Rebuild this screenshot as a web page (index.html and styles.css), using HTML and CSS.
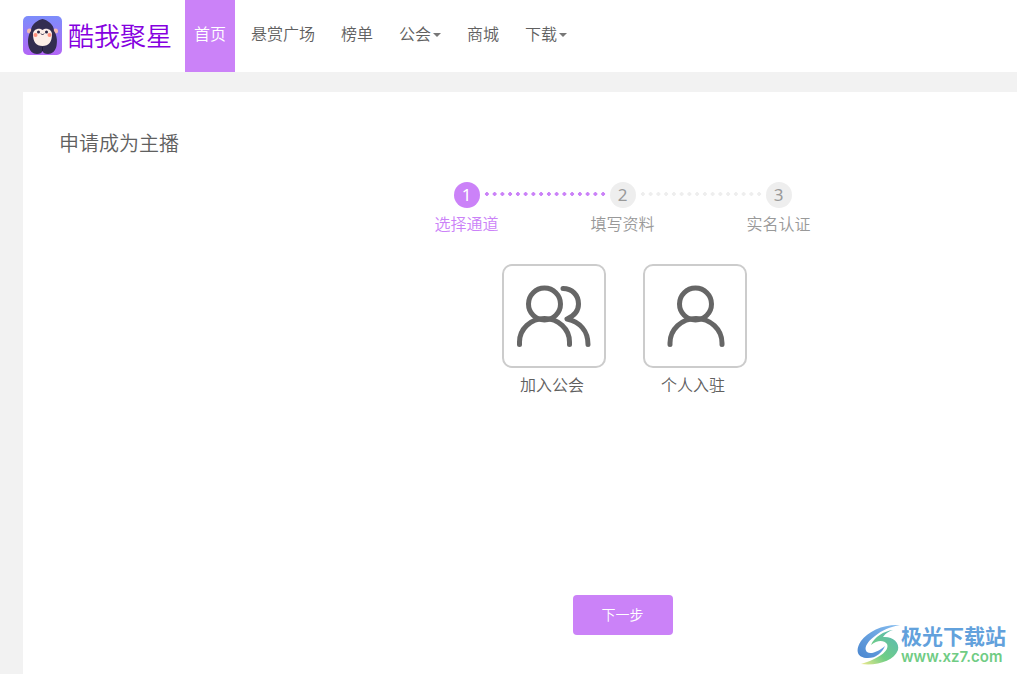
FILE: index.html
```html
<!DOCTYPE html>
<html lang="zh-CN">
<head>
<meta charset="utf-8">
<title>申请成为主播 - 酷我聚星</title>
<link rel="stylesheet" href="styles.css">
</head>
<body>
<header class="header">
  <a class="brand" href="#">
    <svg class="brand-icon" viewBox="0 0 39 39" aria-hidden="true">
      <defs>
        <linearGradient id="tile" x1="0" y1="0" x2="0" y2="1"><stop offset="0" stop-color="#7c8dfb"/><stop offset="1" stop-color="#b366f6"/></linearGradient>
      </defs>
      <rect width="39" height="39" rx="5" fill="url(#tile)"/>
      <circle cx="6.500" cy="15" r="2.500" fill="#f3b9b0"/><circle cx="32.500" cy="15" r="2.500" fill="#f3b9b0"/>
      <path d="M19.500 3C15 4 8 8 8 15C5 19 4.500 25 5.500 30C6.500 35 10 38 14 38C17 38 19 37 19.500 35C20 37 22 38 25 38C29 38 32.500 35 33.500 30C34.500 25 34 19 31 15C31 8 24 4 19.500 3Z" fill="#332d50"/>
      <path d="M19.500 14C16 11 10 13.500 10 18C10 26 13 30 19.500 30C26 30 29 26 29 18C29 13.500 23 11 19.500 14Z" fill="#fdeee8"/>
      <circle cx="12.500" cy="19" r="2" fill="#ff8f7c"/><circle cx="26.500" cy="19" r="2" fill="#ff8f7c"/>
      <circle cx="15.500" cy="16" r="1.500" fill="#292340"/><circle cx="23.500" cy="16" r="1.500" fill="#292340"/>
      <path d="M18 17.500L19.500 19L21 17.500" fill="none" stroke="#292340"/>
      <path d="M19.500 31V35" stroke="#1e1938"/>
    </svg>
    <span class="brand-name">酷我聚星</span>
  </a>
  <nav class="nav">
    <a class="nav-link active" href="#">首页</a>
    <a class="nav-link" href="#">悬赏广场</a>
    <a class="nav-link" href="#">榜单</a>
    <a class="nav-link has-menu" href="#">公会</a>
    <a class="nav-link" href="#">商城</a>
    <a class="nav-link has-menu" href="#">下载</a>
  </nav>
</header>
<main class="page">
  <section class="panel">
    <h1 class="title">申请成为主播</h1>
    <div class="wizard">
      <ol class="steps">
        <li class="step current"><span class="step-number">1</span><span class="step-name">选择通道</span><span class="step-line"></span></li>
        <li class="step"><span class="step-number">2</span><span class="step-name">填写资料</span><span class="step-line"></span></li>
        <li class="step"><span class="step-number">3</span><span class="step-name">实名认证</span></li>
      </ol>
      <div class="channels">
        <button class="channel" type="button">
          <span class="channel-box">
            <svg viewBox="0 0 100 100" aria-hidden="true"><circle cx="40.500" cy="38" r="16"/><path d="M15.500 78.500V76a25 23.500 0 0 1 50 0V78.500"/><path d="M59 22.500C68 22.500 74.500 29 74.500 38C74.500 46 70 50 63 53C76 56 84 65 84 78.500"/></svg>
          </span>
          <span>加入公会</span>
        </button>
        <button class="channel" type="button">
          <span class="channel-box">
            <svg viewBox="0 0 100 100" aria-hidden="true"><circle cx="50.500" cy="38" r="16"/><path d="M25 78.500V77a26 24.500 0 0 1 52 0V78.500"/></svg>
          </span>
          <span>个人入驻</span>
        </button>
      </div>
      <button class="next" type="button">下一步</button>
    </div>
  </section>
</main>
<aside class="watermark">
  <svg class="watermark-icon" viewBox="0 0 44 42" aria-hidden="true">
    <defs>
      <linearGradient id="blue" x1="0" y1="1" x2="1" y2="0"><stop offset="0" stop-color="#4a86cf"/><stop offset="1" stop-color="#86bdf0"/></linearGradient>
      <linearGradient id="green" x1="1" y1="0" x2="0" y2="1"><stop offset="0" stop-color="#58b7b8"/><stop offset=".6" stop-color="#70ce85"/><stop offset="1" stop-color="#efe98c"/></linearGradient>
    </defs>
    <path d="M43 1C27 0 11 7 4 17C-2 26 0 33 9 34C18 35 25 29 28 22C22 27 14 31 10 28C6 24 11 17 18 12C25 6 33 3 43 1Z" fill="url(#blue)"/>
    <path d="M36 6C27 7 17 13 14 21C20 16 27 16 30 20C33 27 21 35 4 40C20 42 37 37 41 26C43 18 35 12 26 13C29 9 32 7 36 6Z" fill="url(#green)"/>
  </svg>
  <span class="watermark-text"><span class="watermark-name">极光下载站</span><span class="watermark-url">www.xz7.com</span></span>
</aside>
</body>
</html>
```

FILE: styles.css
```css
* {
  box-sizing: border-box;
}

body {
  margin: 0;
  min-height: 100vh;
  display: flex;
  flex-direction: column;
  position: relative;
  background: #f2f2f2;
  color: #606060;
  font: 16px/24px "Noto Sans CJK SC", sans-serif;
  font-weight: 350;
}

button {
  border: 0;
  padding: 0;
  background: none;
  color: inherit;
  font: inherit;
  cursor: pointer;
}

a {
  color: inherit;
  text-decoration: none;
}

.header {
  display: flex;
  height: 72px;
  padding-left: 23px;
  background: #fff;
}

.brand {
  display: flex;
  align-items: center;
  gap: 6px;
  width: 162px;
  padding-bottom: 2px;
  color: #8500e0;
}

.brand-icon {
  width: 39px;
  height: 39px;
}

.brand-name {
  font-size: 26px;
  line-height: 38px;
  white-space: nowrap;
}

.nav {
  display: flex;
}

.nav-link {
  display: flex;
  align-items: center;
  padding: 0 13px 6px;
  white-space: nowrap;
}

.nav-link.active {
  margin-right: 3px;
  padding: 0 9px 6px;
  background: #cb82f8;
  color: #fff;
}

.has-menu::after {
  content: "";
  margin: 4px 0 0 2px;
  border: 4px solid transparent;
  border-top-color: #777;
  border-bottom: 0;
}

.page {
  flex: 1;
  display: flex;
  padding: 20px 0 0 23px;
}

.panel {
  flex: 1;
  display: flex;
  flex-direction: column;
  padding: 36px 0 39px 36px;
  background: #fff;
}

.title {
  margin: 0 0 24px;
  font-size: 20px;
  line-height: 30px;
  font-weight: 350;
}

.wizard {
  flex: 1;
  display: flex;
  flex-direction: column;
  align-items: center;
  padding-left: 169px;
}

.steps {
  display: grid;
  grid-template-columns: 64px 92px 64px 92px 64px;
  grid-template-rows: 26px 24px;
  row-gap: 3px;
  margin: 0 0 29px;
  padding: 0;
  list-style: none;
  color: #999;
}

.step {
  display: contents;
}

.step.current {
  color: #cb82f8;
}

.step-number {
  grid-row: 1;
  justify-self: center;
  width: 26px;
  height: 26px;
  border-radius: 50%;
  background: #eee;
  font: 17px/26px "Noto Sans", sans-serif;
  text-align: center;
}

.current .step-number {
  background: #cb82f8;
  color: #fff;
}

.step-name {
  grid-row: 2;
  white-space: nowrap;
}

.step:nth-child(1) > .step-number,
.step:nth-child(1) > .step-name {
  grid-column: 1;
}

.step:nth-child(2) > .step-number,
.step:nth-child(2) > .step-name {
  grid-column: 3;
}

.step:nth-child(3) > .step-number,
.step:nth-child(3) > .step-name {
  grid-column: 5;
}

.step-line {
  grid-row: 1;
  grid-column: 1 / 4;
  height: 8px;
  margin: 8px 48px;
  background: radial-gradient(circle, #eee 2px, transparent 2px) 0 0 / 8px 8px round;
}

.step:nth-child(2) > .step-line {
  grid-column: 3 / 6;
}

.current .step-line {
  background-image: radial-gradient(circle, #cb82f8 2px, transparent 2px);
}

.channels {
  display: flex;
  gap: 41px;
  margin-bottom: auto;
}

.channel {
  display: flex;
  flex-direction: column;
  align-items: center;
  gap: 4px;
  width: 100px;
}

.channel-box {
  align-self: flex-start;
  width: 104px;
  height: 104px;
  border: 2px solid #ccc;
  border-radius: 10px;
}

.channel-box svg {
  display: block;
  fill: none;
  stroke: #666;
  stroke-width: 5;
  stroke-linecap: round;
  stroke-linejoin: round;
}

.next {
  width: 100px;
  height: 40px;
  padding-bottom: 2px;
  border-radius: 4px;
  background: #cb82f8;
  color: #fff;
  font-size: 14px;
}

.watermark {
  position: absolute;
  right: 11px;
  bottom: 6px;
  display: flex;
  align-items: center;
}

.watermark-icon {
  width: 44px;
  height: 42px;
}

.watermark-text {
  display: flex;
  flex-direction: column;
  padding-bottom: 2px;
}

.watermark-name {
  color: #62a1dc;
  font-size: 21px;
  line-height: 26px;
  font-weight: 700;
}

.watermark-url {
  color: #70cc84;
  font: 600 15px/18px Inter, "Liberation Sans", sans-serif;
}
```
